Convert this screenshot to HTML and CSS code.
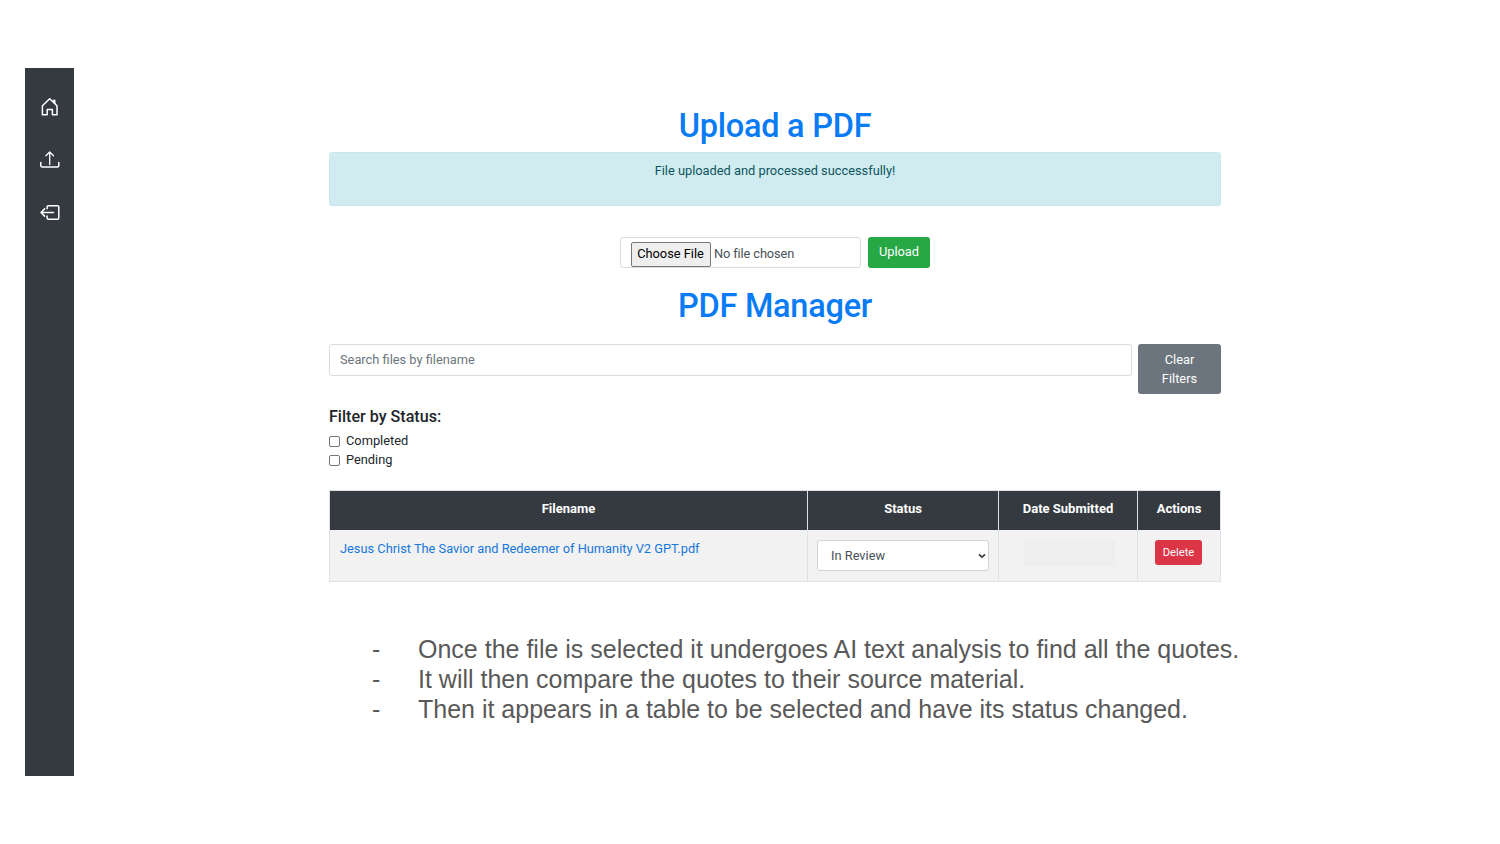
FILE: index.html
```html
<!DOCTYPE html>
<html lang="en">
<head>
<meta charset="utf-8">
<title>PDF Manager</title>
<link rel="stylesheet" href="styles.css">
</head>
<body>
<div class="page">
  <nav class="sidebar">
    <a class="nav-item" aria-label="Home"><svg viewBox="0 0 20 20"><path d="M2.400 17.800V8.700l7.300-6.900 7.300 6.900v9.100h-4.600v-5.300H7.200v5.300z"/><path class="solid" d="M12.800 2.700h2.700v5l-2.700-2.600z"/></svg></a>
    <a class="nav-item" aria-label="Upload"><svg viewBox="0 0 20 20"><path class="thin" d="M9.700 14.500V2M5.900 5.700 9.700 2l3.800 3.700"/><path d="M.8 12.400v3.200c0 .9.600 1.500 1.500 1.500h15c.9 0 1.500-.6 1.500-1.500v-3.200"/></svg></a>
    <a class="nav-item" aria-label="Log out"><svg viewBox="0 0 20 20"><path d="M13.500 9.500H1M4.600 5.900 1 9.500l3.600 3.600M7.100 5.800V4c0-.8.500-1.300 1.300-1.300h9.100c.8 0 1.300.5 1.300 1.300v10.900c0 .8-.5 1.300-1.300 1.300H8.400c-.8 0-1.300-.5-1.300-1.300v-2"/></svg></a>
  </nav>
  <main class="content">
    <section class="app">
      <h1 class="title title-upload">Upload a PDF</h1>
      <div class="alert"><span>File uploaded and processed successfully!</span></div>
      <form class="upload-form">
        <div class="file-input"><span class="choose">Choose File</span><span class="no-file">No file chosen</span></div>
        <button class="btn btn-upload" type="button">Upload</button>
      </form>
      <h1 class="title title-manager">PDF Manager</h1>
      <div class="search-row">
        <input class="search" type="text" placeholder="Search files by filename">
        <button class="btn btn-clear" type="button">Clear<br>Filters</button>
      </div>
      <h2 class="filter-title">Filter by Status:</h2>
      <label class="check"><span class="box"></span>Completed</label>
      <label class="check"><span class="box"></span>Pending</label>
      <div class="table">
        <div class="row head">
          <div class="cell">Filename</div><div class="cell">Status</div><div class="cell">Date Submitted</div><div class="cell">Actions</div>
        </div>
        <div class="row body">
          <div class="cell name"><a class="file-link">Jesus Christ The Savior and Redeemer of Humanity V2 GPT.pdf</a></div>
          <div class="cell"><div class="select"><span>In Review</span><svg class="chevron" viewBox="0 0 8 6"><path d="M1 1.300 4 4.200 7 1.300"/></svg></div></div>
          <div class="cell date"><span class="date-blank"></span></div>
          <div class="cell action"><button class="btn btn-delete" type="button">Delete</button></div>
        </div>
      </div>
    </section>
    <ul class="notes">
      <li><span class="dash">-</span><span>Once the file is selected it undergoes AI text analysis to find all the quotes.</span></li>
      <li><span class="dash">-</span><span>It will then compare the quotes to their source material.</span></li>
      <li><span class="dash">-</span><span>Then it appears in a table to be selected and have its status changed.</span></li>
    </ul>
  </main>
</div>
</body>
</html>
```
FILE: styles.css
```css
* { box-sizing: border-box; }
body { margin: 0; background: #fff; color: #212529; font: 12.82px/20px Roboto, sans-serif; }
.page { display: flex; height: 844px; padding: 68px 0 0 25px; overflow: hidden; }
.sidebar { display: flex; flex-direction: column; align-items: center; gap: 33px; width: 49px; height: 708px; padding-top: 29px; background: #343a40; }
.nav-item { width: 20px; height: 20px; }
.nav-item svg { display: block; width: 20px; height: 20px; fill: none; stroke: #fff; stroke-width: 1.5; stroke-linecap: round; stroke-linejoin: round; }
.nav-item .thin { stroke-width: 1.3; }
.nav-item .solid { fill: #fff; stroke: none; }
.content { margin-left: 255px; }
.app { width: 892px; }
.title { margin: 0; color: #087bf5; font-size: 32.5px; letter-spacing: -0.25px; line-height: 40px; font-weight: 500; text-align: center; }
.title-upload { padding-top: 38px; height: 84px; }
.alert { height: 54px; padding-top: 8px; border: 1px solid #c8e8ed; border-radius: 3px; background: #d1ecf1; color: #0c5460; text-align: center; }
.upload-form { display: flex; justify-content: center; gap: 7px; margin-top: 31px; }
.file-input { display: flex; align-items: flex-start; width: 241px; height: 31px; padding: 4px 10px 0; border: 1px solid #d8dce0; border-radius: 3px; color: #495057; }
.choose { width: 80px; height: 25px; padding: 1px 1px 0 0; border: 1px solid #777; border-radius: 2px; background: #efefef; color: #000; text-align: center; }
.no-file { padding: 2px 0 0 3px; letter-spacing: -0.12px; }
.btn { border: 0; border-radius: 3px; color: #fff; font: 12.82px/19px Roboto, sans-serif; padding: 0; }
.btn-upload { width: 62px; height: 31px; padding-bottom: 3px; background: #28a745; }
.title-manager { margin-top: 18px; height: 58px; }
.search-row { display: flex; align-items: flex-start; gap: 6px; }
.search { flex: 1; height: 32px; padding: 0 10px 2px; border: 1px solid #d8dce0; border-radius: 3px; font: 12.82px/20px Roboto, sans-serif; }
.search::placeholder { color: #6c757d; opacity: 1; }
.btn-clear { width: 83px; height: 50px; background: #6c757d; }
.filter-title { margin: 13px 0 4px; font-size: 16.1px; line-height: 20px; font-weight: 500; }
.check { display: flex; align-items: center; gap: 6px; height: 20px; }
.check + .check { margin-top: -1px; }
.box { width: 11px; height: 11px; border: 1px solid #767676; border-radius: 2px; }
.table { margin-top: 20px; border: 1px solid #dee2e6; }
.row { display: grid; grid-template-columns: 477px 191px 139px 83px; }
.cell { border-left: 1px solid #dee2e6; }
.cell:first-child { border-left: 0; }
.head { height: 39px; background: #343a40; color: #fff; font-size: 13px; font-weight: 700; line-height: 36px; text-align: center; }
.body { height: 51px; background: #f2f2f2; }
.name { padding: 9px 10px; }
.file-link { color: #1677dc; white-space: nowrap; }
.select { display: flex; align-items: center; justify-content: space-between; width: 172px; height: 31px; margin: 10px 0 0 9px; padding: 0 2px 0 13px; border: 1px solid #ced4da; border-radius: 3px; background: #fff; color: #495057; }
.chevron { width: 8px; height: 6px; fill: none; stroke: #343a40; stroke-width: 1.6; }
.date { padding: 10px 0 0 25px; }
.date-blank { display: block; width: 91px; height: 26px; background: #eee; }
.action { padding: 10px 0 0 17px; }
.btn-delete { display: block; width: 47px; height: 25px; background: #dc3545; font-size: 11.2px; }
.notes { list-style: none; margin: 52px 0 0 43px; padding: 0; color: #595959; font: 25px/30px "Liberation Sans", Arial, sans-serif; }
.notes li { display: flex; white-space: nowrap; }
.dash { width: 46px; }
```
